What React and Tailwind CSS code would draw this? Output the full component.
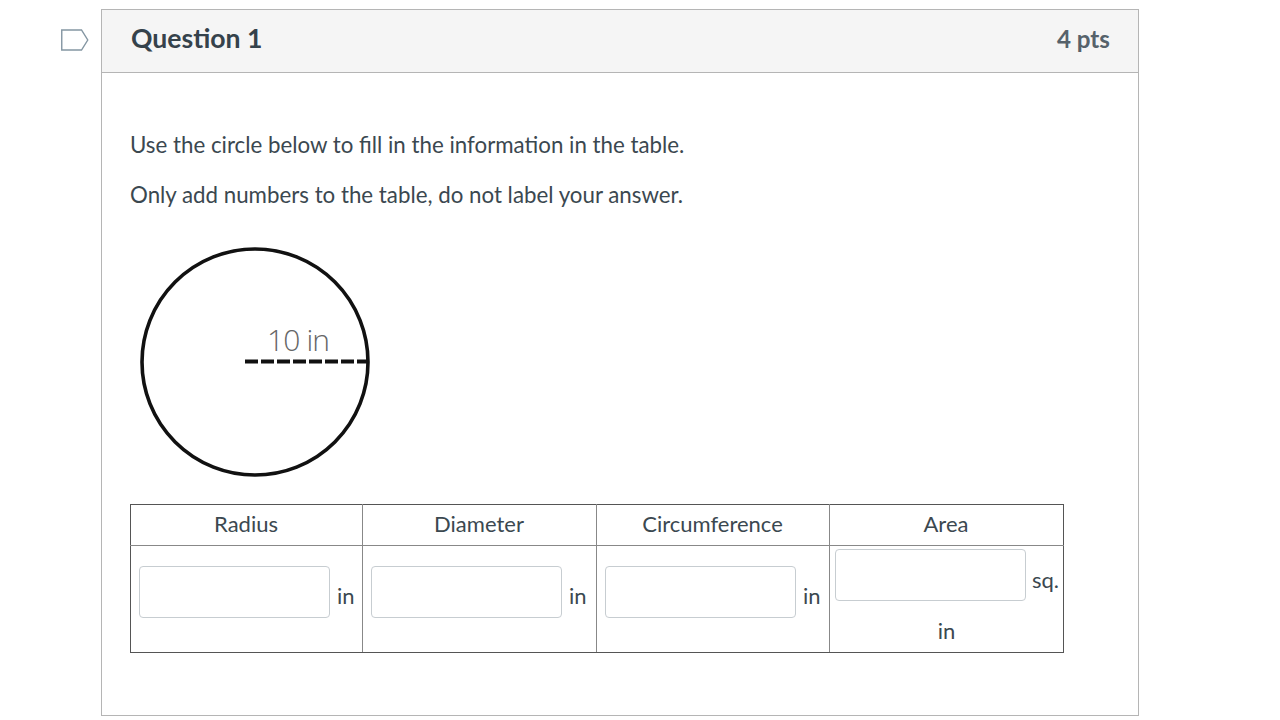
const Cell = ({ unit, first }) => (
  <td className={first ? "border border-[#888] border-b-[#555] border-l-[#555] p-0 h-[107px] align-top" : "border border-[#888] border-b-[#555] p-0 h-[107px] align-top"}>
    <div className="flex items-center pl-2 pt-[20px]">
      <input type="text" className="w-[191px] h-[52px] bg-white border border-[#c7cdd1] rounded-[4px] shrink-0" />
      <span className="ml-[7px] mt-[7px]">{unit}</span>
    </div>
  </td>
);

const Circle = () => (
  <svg width="232" height="232" viewBox="0 0 232 232" className="block">
    <circle cx="115" cy="116" r="113" fill="none" stroke="#111" strokeWidth="3.6" />
    <line x1="105" y1="115.5" x2="228" y2="115.5" stroke="#111" strokeWidth="4" strokeDasharray="13 3" />
    <text x="127" y="105" fontFamily="'Open Sans', sans-serif" fontSize="30" fontWeight="300" fill="#666" textLength="63">10 in</text>
  </svg>
);

export default function App() {
  return (
    <div className="w-[1280px] h-[720px] bg-white overflow-hidden flex items-start pt-[9px] pl-[61px] text-[#3b4850] font-['Lato','Open_Sans',sans-serif]">
      <svg width="28" height="22" viewBox="0 0 28 22" className="mt-[20px] shrink-0">
        <path d="M0.75 1 H20.5 L26.75 11 L20.5 21 H0.75 Z" fill="none" stroke="#8496a2" strokeWidth="1.4" />
      </svg>
      <div className="ml-[12px] w-[1038px] h-[707px] border border-[#b5b5b5] shrink-0">
        <div className="h-[63px] bg-[#f5f5f5] border-b border-[#b5b5b5] flex justify-between pl-[29px] pr-[28px]">
          <h2 className="text-[26.6px] font-bold leading-[32px] mt-[12px] text-[#35424b]">Question 1</h2>
          <span className="text-[24.2px] font-bold leading-[32px] mt-[13px] text-[#56626b]">4 pts</span>
        </div>
        <div className="pl-[28px] pt-[56px] text-[22.3px] leading-[32px]">
          <p>Use the circle below to fill in the information in the table.</p>
          <p className="mt-[18px]">Only add numbers to the table, do not label your answer.</p>
          <div className="mt-[35px] ml-[10px]"><Circle /></div>
          <table className="mt-[26px] w-[933px] table-fixed border-collapse text-[22px]">
            <colgroup>
              <col className="w-[232px]" />
              <col className="w-[234px]" />
              <col className="w-[233px]" />
              <col className="w-[234px]" />
            </colgroup>
            <thead>
              <tr className="h-[41px]">
                {["Radius", "Diameter", "Circumference", "Area"].map((h) => (
                  <th key={h} className="border border-[#888] border-t-[#555] first:border-l-[#555] last:border-r-[#555] font-normal text-center p-0 pb-[2px] pr-[1px]">{h}</th>
                ))}
              </tr>
            </thead>
            <tbody>
              <tr>
                <Cell unit="in" first />
                <Cell unit="in" />
                <Cell unit="in" />
                <td className="border border-[#888] border-b-[#555] border-r-[#555] p-0 h-[107px] align-top">
                  <div className="flex items-center pl-[5px] pt-[3px]">
                    <input type="text" className="w-[191px] h-[52px] bg-white border border-[#c7cdd1] rounded-[4px] shrink-0" />
                    <span className="ml-[6px] mt-[9px]">sq.</span>
                  </div>
                  <div className="text-center mt-[14px]">in</div>
                </td>
              </tr>
            </tbody>
          </table>
        </div>
      </div>
    </div>
  );
}
